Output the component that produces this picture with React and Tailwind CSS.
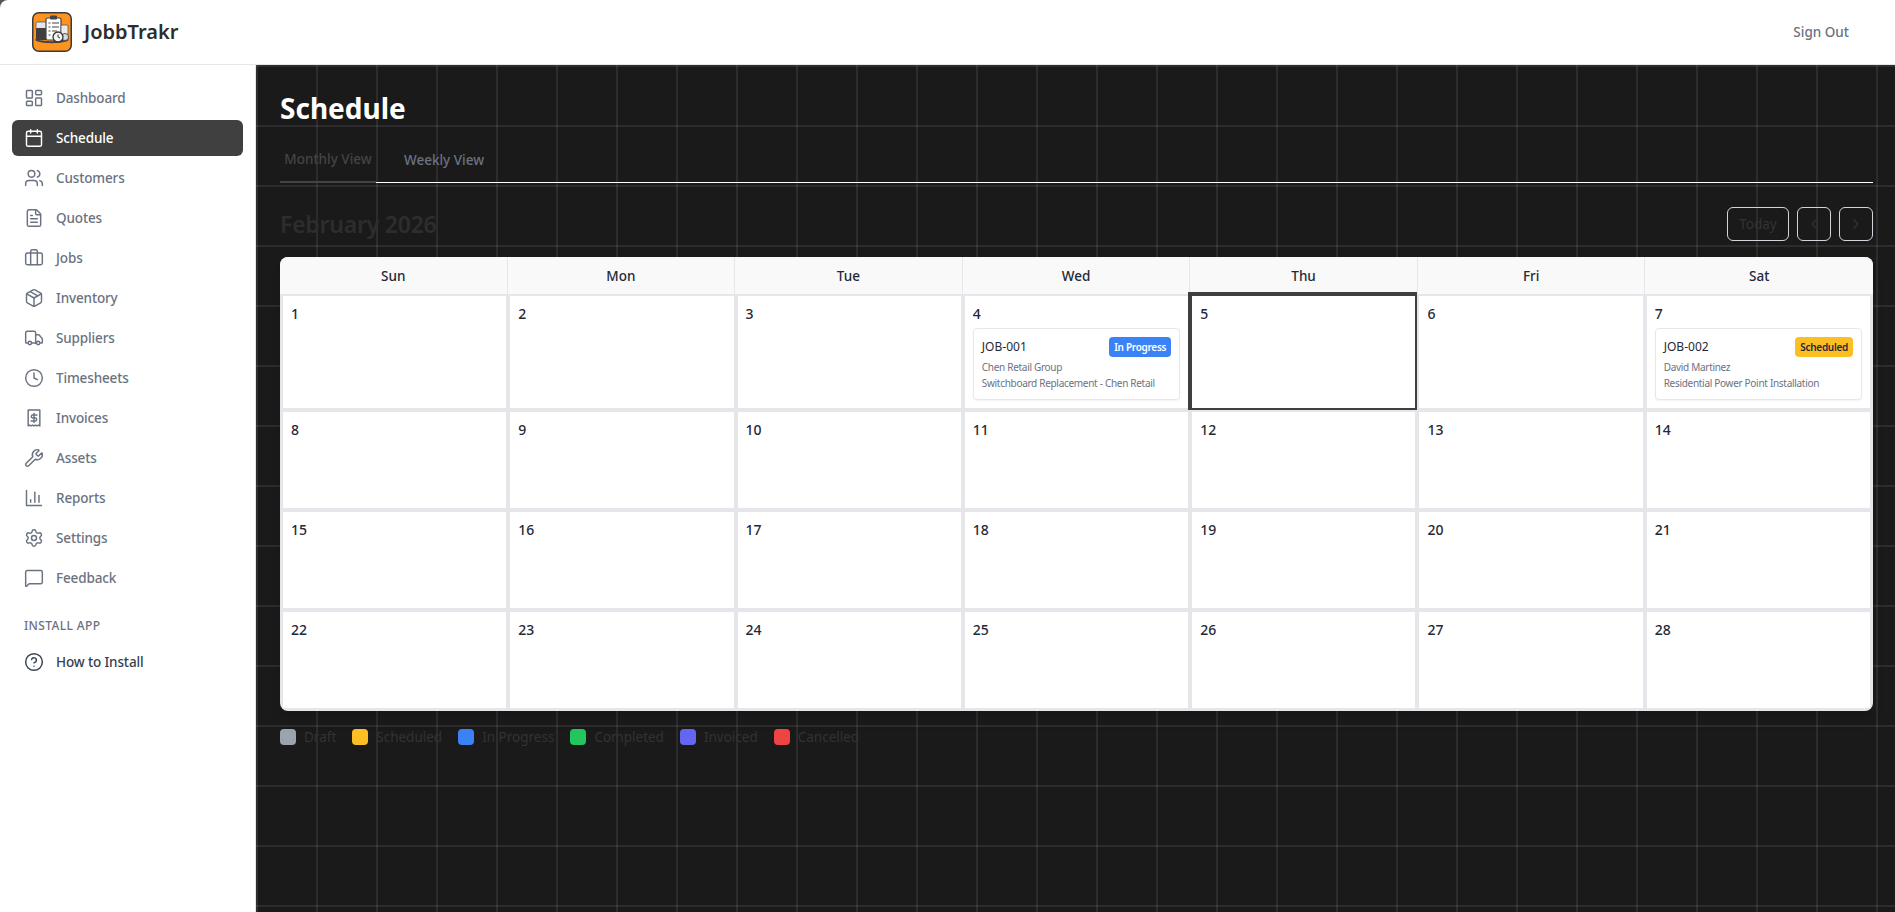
import {
  LayoutDashboard, Calendar, Users, FileText, Briefcase, Package, Truck, Clock,
  Wrench, Settings, MessageSquare, CircleHelp, ChevronLeft, ChevronRight,
} from 'lucide-react';

function InvoiceIcon(props) {
  return (
    <svg viewBox="0 0 24 24" fill="none" stroke="currentColor" strokeWidth="2" strokeLinecap="round" strokeLinejoin="round" {...props}>
      <path d="M5 2.5h14v19l-1.75-1-1.75 1-1.75-1-1.75 1-1.75-1-1.75 1-1.75-1L5 21.5z" />
      <path d="M15.5 8.5h-5a1.75 1.75 0 0 0 0 3.5h3a1.75 1.75 0 0 1 0 3.5h-5" />
      <path d="M12 6.5v11" />
    </svg>
  );
}

function ReportsIcon(props) {
  return (
    <svg viewBox="0 0 24 24" fill="none" stroke="currentColor" strokeWidth="2" strokeLinecap="round" strokeLinejoin="round" {...props}>
      <path d="M3 3v18h18" />
      <path d="M18 17V9" />
      <path d="M13 17V5" />
      <path d="M8 17v-3" />
    </svg>
  );
}

function Logo() {
  return (
    <svg viewBox="0 0 40 40" className="w-10 h-10 shrink-0">
      <rect x="0.75" y="0.75" width="38.5" height="38.5" rx="6" fill="#ff9320" stroke="#3a3a3a" strokeWidth="1.5" />
      <path d="M3 27c9 3 25 3 34-1l-1 3c-10 3-23 3-32 0z" fill="#444" />
      <rect x="4" y="10" width="11" height="8" rx="1" fill="#e6e6e6" stroke="#555" strokeWidth="0.8" />
      <rect x="4" y="16" width="12" height="12" rx="1" fill="#3f3f3f" />
      <rect x="14" y="6" width="15" height="22" rx="1.5" fill="#fff" stroke="#444" strokeWidth="1.2" />
      <rect x="18" y="3.5" width="7" height="4" rx="1" fill="#444" />
      <path d="M16.5 11h2M20 11h7M16.5 15h2M20 15h7M16.5 19h2M20 19h5M16.5 23h2" stroke="#444" strokeWidth="1.1" />
      <rect x="29" y="13" width="7" height="11" rx="1" fill="#ececec" stroke="#555" strokeWidth="0.8" />
      <circle cx="33" cy="25" r="3.5" fill="#ddd" stroke="#444" strokeWidth="0.9" />
      <circle cx="26" cy="25" r="5" fill="#f3f3f3" stroke="#333" strokeWidth="1.3" />
      <path d="M26 22.5v2.5l2 1" fill="none" stroke="#333" strokeWidth="1" />
    </svg>
  );
}

const nav = [
  ['Dashboard', LayoutDashboard],
  ['Schedule', Calendar],
  ['Customers', Users],
  ['Quotes', FileText],
  ['Jobs', Briefcase],
  ['Inventory', Package],
  ['Suppliers', Truck],
  ['Timesheets', Clock],
  ['Invoices', InvoiceIcon],
  ['Assets', Wrench],
  ['Reports', ReportsIcon],
  ['Settings', Settings],
  ['Feedback', MessageSquare],
];

const days = ['Sun', 'Mon', 'Tue', 'Wed', 'Thu', 'Fri', 'Sat'];

const jobs = {
  4: { id: 'JOB-001', status: 'In Progress', badge: 'bg-[#3b82f6] text-white', customer: 'Chen Retail Group', title: 'Switchboard Replacement - Chen Retail' },
  7: { id: 'JOB-002', status: 'Scheduled', badge: 'bg-[#fbbf24] text-[#1f2937]', customer: 'David Martinez', title: 'Residential Power Point Installation' },
};

const legend = [
  ['Draft', 'bg-[#9ca3af]'],
  ['Scheduled', 'bg-[#fbbf24]'],
  ['In Progress', 'bg-[#3b82f6]'],
  ['Completed', 'bg-[#22c55e]'],
  ['Invoiced', 'bg-[#6366f1]'],
  ['Cancelled', 'bg-[#ef4444]'],
];

function JobCard({ job }) {
  return (
    <div className="mt-1 bg-white border border-[#e5e7eb] rounded-[4px] shadow-[0_1px_2px_rgba(0,0,0,0.05)] px-2 pt-2 pb-2">
      <div className="flex items-center justify-between h-5">
        <span className="text-xs text-[#1f2937]">{job.id}</span>
        <span className={`h-5 flex items-center px-[5px] rounded-[4px] text-[10px] font-semibold tracking-[-0.03em] ${job.badge}`}>{job.status}</span>
      </div>
      <p className="mt-[2px] text-[10px] leading-4 tracking-[-0.03em] text-[#6b7280] whitespace-nowrap">{job.customer}</p>
      <p className="text-[10px] leading-4 tracking-[-0.03em] text-[#6b7280] whitespace-nowrap">{job.title}</p>
    </div>
  );
}

function DayCell({ day }) {
  return (
    <div className="relative bg-white px-2 pt-2 min-w-0">
      <span className="block text-sm leading-[20px] font-medium text-[#1f2937]">{day}</span>
      {jobs[day] && <JobCard job={jobs[day]} />}
      {day === 5 && <div className="absolute -left-1 -top-1 -right-0.5 -bottom-0.5 border-t-4 border-l-4 border-r-2 border-b-2 border-[#3f3f3f]" />}
    </div>
  );
}

export default function App() {
  return (
    <div className="h-[912px] overflow-hidden flex flex-col bg-[#555555] font-['Noto_Sans','Open_Sans',sans-serif]">
      <header className="h-[65px] shrink-0 flex items-center justify-between pl-8 pr-[46px] bg-white border-b border-[#e5e7eb] rounded-tl-lg">
        <div className="flex items-center gap-3">
          <Logo />
          <span className="text-xl font-semibold text-[#2d2d2d]">JobbTrakr</span>
        </div>
        <button className="text-[13.5px] font-medium text-[#6b7280]">Sign Out</button>
      </header>

      <div className="flex-1 flex min-h-0">
        <aside className="w-[256px] shrink-0 bg-white border-r border-[#e5e7eb] px-3 pt-[15px]">
          <nav className="flex flex-col gap-1">
            {nav.map(([label, Icon]) => (
              <a
                key={label}
                className={`h-9 flex items-center gap-3 px-3 rounded-md text-[13.5px] font-medium tracking-[-0.01em] ${label === 'Schedule' ? 'bg-[#404040] text-white' : 'text-[#6b7280]'}`}
              >
                <Icon className="w-5 h-5" strokeWidth={1.75} />
                {label}
              </a>
            ))}
          </nav>
          <p className="mt-[22px] px-3 text-xs font-medium tracking-[0.03em] text-[#6b7280]">INSTALL APP</p>
          <a className="mt-[10px] h-9 flex items-center gap-3 px-3 text-[13.5px] font-medium tracking-[-0.01em] text-[#374151]">
            <CircleHelp className="w-5 h-5" strokeWidth={1.75} />
            How to Install
          </a>
        </aside>

        <main className="flex-1 min-w-0 pl-6 pr-[22px] pt-[22px] bg-[#1a1a1a] bg-[linear-gradient(rgba(255,255,255,0.08)_2px,transparent_2px),linear-gradient(90deg,rgba(255,255,255,0.08)_2px,transparent_2px)] bg-size-[60px_60px]">
          <h1 className="text-[28px] leading-[42px] font-bold text-white">Schedule</h1>

          <div className="mt-2 flex border-b border-white h-[46px]">
            <button className="h-[46px] w-24 text-[13.5px] font-medium whitespace-nowrap text-[#444444] border-b-2 border-[#444444]">Monthly View</button>
            <button className="h-[46px] ml-7 text-[13.5px] font-medium whitespace-nowrap text-[#6b7280]">Weekly View</button>
          </div>

          <div className="mt-6 flex items-center justify-between h-[34px]">
            <h2 className="text-[23px] font-semibold tracking-[-0.01em] text-[#2d2d2d]">February 2026</h2>
            <div className="flex gap-2">
              <button className="h-[34px] w-[62px] rounded-md border border-[#d1d5db] text-[13.5px] text-[#333333]">Today</button>
              <button className="h-[34px] w-[34px] rounded-md border border-[#d1d5db] flex items-center justify-center text-[#333333]"><ChevronLeft className="w-4 h-4" /></button>
              <button className="h-[34px] w-[34px] rounded-md border border-[#d1d5db] flex items-center justify-center text-[#333333]"><ChevronRight className="w-4 h-4" /></button>
            </div>
          </div>

          <div className="mt-4 rounded-lg overflow-hidden bg-[#e5e5ea] shadow-lg">
            <div className="grid grid-cols-7 bg-[#f9f9f9]">
              {days.map((d) => (
                <div key={d} className="h-[37px] pt-[2px] flex items-center justify-center text-[13.5px] font-medium text-[#1f2937] border-r border-[#e5e7eb] last:border-r-0">{d}</div>
              ))}
            </div>
            <div className="grid grid-cols-7 gap-1 px-[3px] pt-[2px] pb-[3px] grid-rows-[112px_96px_96px_96px]">
              {Array.from({ length: 28 }, (_, i) => <DayCell key={i} day={i + 1} />)}
            </div>
          </div>

          <div className="mt-4 flex items-center gap-4">
            {legend.map(([label, color]) => (
              <div key={label} className="flex items-center gap-2">
                <span className={`w-4 h-4 rounded-[4px] ${color}`} />
                <span className="text-[13.5px] text-[#333333]">{label}</span>
              </div>
            ))}
          </div>
        </main>
      </div>
    </div>
  );
}
